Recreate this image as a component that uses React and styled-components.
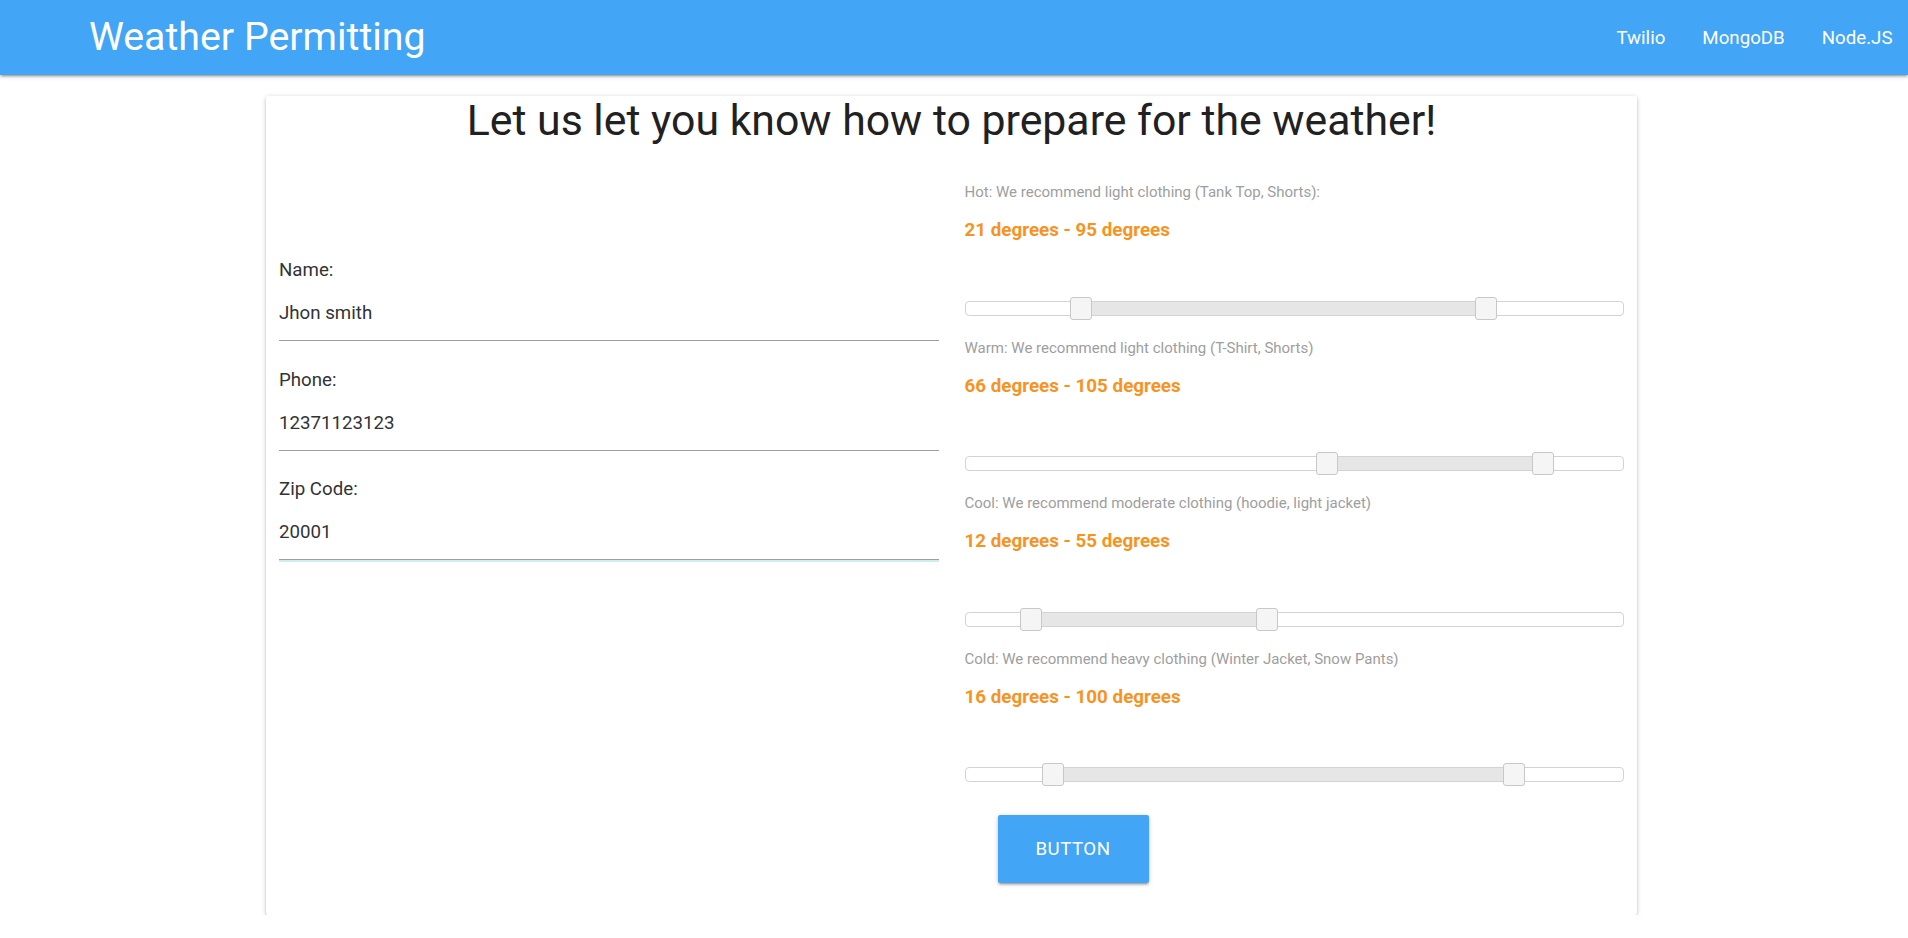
import React from "react";
import styled, { createGlobalStyle } from "styled-components";

const GlobalStyle = createGlobalStyle`
  html, body {
    margin: 0;
    padding: 0;
    background: #fff;
    font-family: Roboto, "Liberation Sans", sans-serif;
    color: rgba(0, 0, 0, 0.87);
  }
  * {
    box-sizing: border-box;
  }
`;

const shadow =
  "0 2px 2px 0 rgba(0,0,0,0.14), 0 3px 1px -2px rgba(0,0,0,0.12), 0 1px 5px 0 rgba(0,0,0,0.2)";

const Nav = styled.nav`
  height: 75px;
  background: #42a5f5;
  box-shadow: ${shadow};
  display: flex;
  align-items: center;
  justify-content: space-between;
  padding-left: 89px;
  color: #fff;
`;

const Brand = styled.a`
  font-size: 39.3px;
  line-height: 75px;
  color: #fff;
  text-decoration: none;
`;

const NavLinks = styled.ul`
  display: flex;
  list-style: none;
  margin: 0 -3px 0 0;
  padding: 0;

  a {
    display: block;
    padding: 0 18.5px;
    font-size: 18.7px;
    line-height: 72px;
    color: #fff;
    text-decoration: none;
  }
`;

const Card = styled.div`
  width: 1371px;
  margin: 21px 0 0 calc(50% - 688px);
  background: #fff;
  border-radius: 2px;
  box-shadow: ${shadow};
  padding-bottom: 32px;
`;

const Title = styled.h3`
  margin: 0;
  text-align: center;
  font-size: 42.8px;
  line-height: 48px;
  font-weight: 400;
  color: #212121;
`;

const Row = styled.div`
  display: grid;
  grid-template-columns: 1fr 1fr;
`;

const Column = styled.div`
  padding: ${(p) => p.$top}px 13px 0;
  display: flex;
  flex-direction: column;
`;

const Field = styled.div`
  display: flex;
  flex-direction: column;
  margin-bottom: 26.5px;
`;

const FieldLabel = styled.label`
  font-size: 18.7px;
  line-height: 24px;
  color: #333;
  margin-bottom: 4px;
`;

const TextInput = styled.input`
  height: 55px;
  border: none;
  border-bottom: 1px solid #9e9e9e;
  box-shadow: ${(p) => (p.$focus ? "0 2px 0 0 #cdeeec" : "none")};
  padding: 0;
  font-family: Roboto, "Liberation Sans", sans-serif;
  font-size: 18.7px;
  color: #333;
  background: transparent;
  outline: none;
  width: 100%;
`;

const Range = styled.div`
  display: flex;
  flex-direction: column;
  margin-bottom: 18px;
`;

const RangeHint = styled.div`
  font-size: 15px;
  line-height: 20px;
  color: #9e9e9e;
`;

const RangeValue = styled.div`
  margin-top: 16px;
  font-size: 18.8px;
  line-height: 24px;
  font-weight: 700;
  color: #f7931e;
`;

const SliderWrap = styled.div`
  position: relative;
  height: 23px;
  margin-top: 54.5px;
  display: flex;
  align-items: center;
`;

const Track = styled.div`
  position: relative;
  width: 100%;
  height: 15px;
  border: 1px solid #d3d3d3;
  border-radius: 4px;
  background: #fff;
`;

const Connect = styled.div`
  position: absolute;
  top: 0;
  bottom: 0;
  background: #e6e6e6;
`;

const Handle = styled.div`
  position: absolute;
  top: 50%;
  width: 22px;
  height: 23px;
  margin: -11.5px 0 0 -11px;
  border: 1px solid #c8c8c8;
  border-radius: 3px;
  background: #f5f5f5;
`;

const Button = styled.button`
  align-self: flex-start;
  margin: 11px 0 0 33px;
  width: 151px;
  height: 68px;
  border: none;
  border-radius: 2px;
  background: #42a5f5;
  color: #fff;
  font-family: Roboto, "Liberation Sans", sans-serif;
  font-size: 18.7px;
  letter-spacing: 0.5px;
  text-transform: uppercase;
  box-shadow: ${shadow};
  cursor: pointer;
`;

const ranges = [
  { hint: "Hot: We recommend light clothing (Tank Top, Shorts):", min: 21, max: 95, from: 17.5, to: 79.1 },
  { hint: "Warm: We recommend light clothing (T-Shirt, Shorts)", min: 66, max: 105, from: 55.0, to: 87.9 },
  { hint: "Cool: We recommend moderate clothing (hoodie, light jacket)", min: 12, max: 55, from: 10.0, to: 45.8 },
  { hint: "Cold: We recommend heavy clothing (Winter Jacket, Snow Pants)", min: 16, max: 100, from: 13.3, to: 83.4 },
];

const fields = [
  { label: "Name:", value: "Jhon smith" },
  { label: "Phone:", value: "12371123123" },
  { label: "Zip Code:", value: "20001", focus: true },
];

const Slider = ({ from, to }) => (
  <SliderWrap>
    <Track>
      <Connect style={{ left: `${from}%`, right: `${100 - to}%` }} />
      <Handle style={{ left: `${from}%` }} />
      <Handle style={{ left: `${to}%` }} />
    </Track>
  </SliderWrap>
);

const App = () => (
  <>
    <GlobalStyle />
    <Nav>
      <Brand href="#">Weather Permitting</Brand>
      <NavLinks>
        <li><a href="#">Twilio</a></li>
        <li><a href="#">MongoDB</a></li>
        <li><a href="#">Node.JS</a></li>
      </NavLinks>
    </Nav>
    <Card>
      <Title>Let us let you know how to prepare for the weather!</Title>
      <Row>
        <Column $top={114}>
          {fields.map((f) => (
            <Field key={f.label}>
              <FieldLabel>{f.label}</FieldLabel>
              <TextInput readOnly defaultValue={f.value} $focus={f.focus} />
            </Field>
          ))}
        </Column>
        <Column $top={38}>
          {ranges.map((r) => (
            <Range key={r.hint}>
              <RangeHint>{r.hint}</RangeHint>
              <RangeValue>{r.min} degrees - {r.max} degrees</RangeValue>
              <Slider from={r.from} to={r.to} />
            </Range>
          ))}
          <Button>Button</Button>
        </Column>
      </Row>
    </Card>
  </>
);

export default App;
